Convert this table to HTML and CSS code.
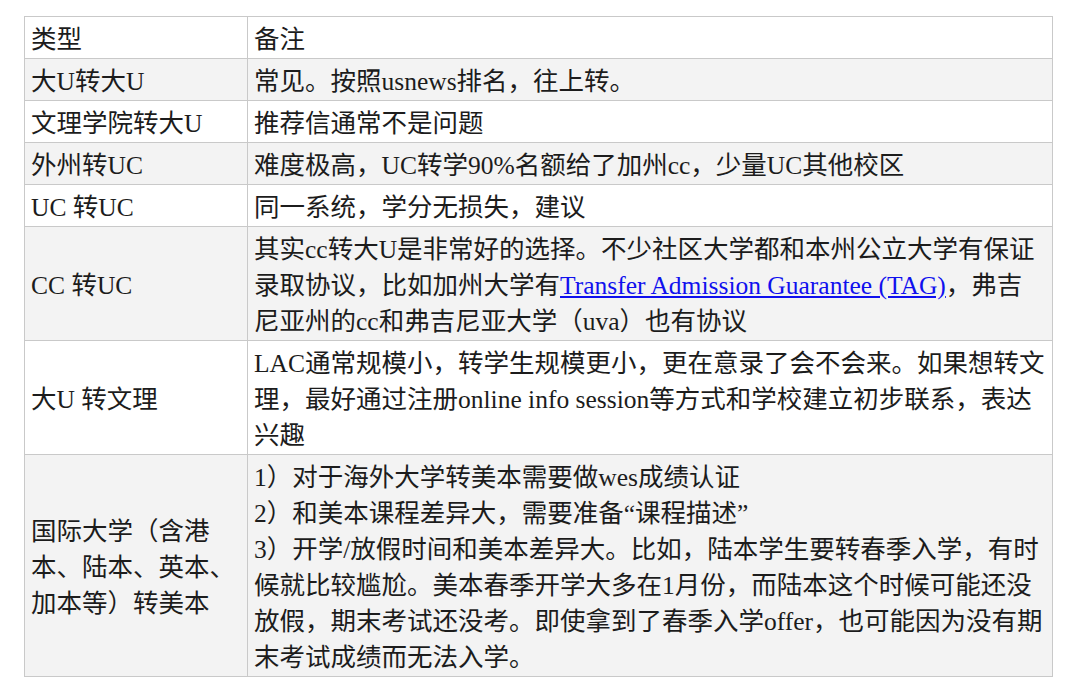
FILE: index.html
```html
<!DOCTYPE html>
<html lang="zh-CN">
<head>
<meta charset="utf-8">
<title>转学类型</title>
<link rel="stylesheet" href="styles.css">
</head>
<body>
<table class="grid">
  <colgroup><col class="c1"><col class="c2"></colgroup>
  <tr class="odd"><td>类型</td><td>备注</td></tr>
  <tr class="even"><td>大U转大U</td><td>常见。按照usnews排名，往上转。</td></tr>
  <tr class="odd"><td>文理学院转大U</td><td>推荐信通常不是问题</td></tr>
  <tr class="even"><td>外州转UC</td><td>难度极高，UC转学90%名额给了加州cc，少量UC其他校区</td></tr>
  <tr class="odd"><td>UC 转UC</td><td>同一系统，学分无损失，建议</td></tr>
  <tr class="even"><td>CC 转UC</td><td>其实cc转大U是非常好的选择。不少社区大学都和本州公立大学有保证<br>录取协议，比如加州大学有<a href="#">Transfer Admission Guarantee (TAG)</a>，弗吉<br>尼亚州的cc和弗吉尼亚大学（uva）也有协议</td></tr>
  <tr class="odd"><td>大U 转文理</td><td>LAC通常规模小，转学生规模更小，更在意录了会不会来。如果想转文<br>理，最好通过注册online info session等方式和学校建立初步联系，表达<br>兴趣</td></tr>
  <tr class="even"><td>国际大学（含港<br>本、陆本、英本、<br>加本等）转美本</td><td>1）对于海外大学转美本需要做wes成绩认证<br>2）和美本课程差异大，需要准备“课程描述”<br>3）开学/放假时间和美本差异大。比如，陆本学生要转春季入学，有时<br>候就比较尴尬。美本春季开学大多在1月份，而陆本这个时候可能还没<br>放假，期末考试还没考。即使拿到了春季入学offer，也可能因为没有期<br>末考试成绩而无法入学。</td></tr>
</table>
</body>
</html>
```

FILE: styles.css
```css
html, body {
  margin: 0;
  padding: 0;
  background: #ffffff;
}
body {
  padding: 16px 0 0 24px;
}
.grid {
  border-collapse: collapse;
  table-layout: fixed;
  width: 1028px;
  border: 1px solid #b9b9b9;
  font-family: "Liberation Serif", "Noto Sans CJK SC", serif;
  font-size: 25.5px;
  line-height: 36px;
  color: #1c1c1c;
}
.c1 { width: 223px; }
.c2 { width: 805px; }
.grid td {
  border: 1px solid #c9c9c9;
  padding: 5px 5px 0 6px;
  vertical-align: middle;
  white-space: nowrap;
}
.grid tr.even td { background: #f3f3f3; }
.grid tr.odd td { background: #ffffff; }
.grid a {
  color: #1010ee;
  text-decoration: underline;
}
```
